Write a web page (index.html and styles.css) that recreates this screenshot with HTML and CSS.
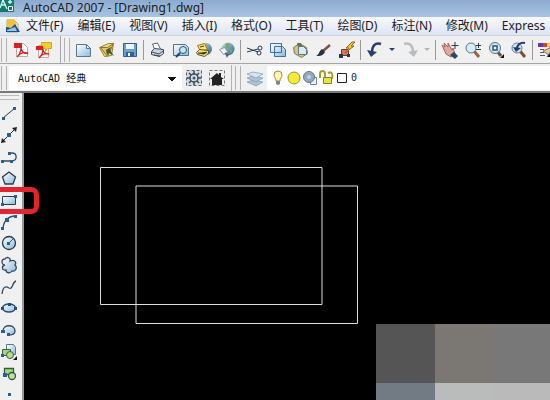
FILE: index.html
```html
<!DOCTYPE html>
<html lang="zh-CN">
<head>
<meta charset="utf-8">
<title>AutoCAD 2007 - [Drawing1.dwg]</title>
<link rel="stylesheet" href="styles.css">
</head>
<body>
<svg class="defs" aria-hidden="true">
  <defs>
    <linearGradient id="blue" x1="0" y1="0" x2="1" y2="1"><stop offset="0" stop-color="#fff"/><stop offset="1" stop-color="#8dbbdc"/></linearGradient>
    <linearGradient id="globe" x1="0" y1="0" x2="1" y2="1"><stop offset="0" stop-color="#b8e0f0"/><stop offset="1" stop-color="#285f92"/></linearGradient>
  </defs>
</svg>
<header class="titlebar">
  <svg class="logo" viewBox="0 0 15 14"><path fill="#137a6c" d="M0 0h14v12H0z"/><path fill="none" stroke="#d9fff4" stroke-width="1.300" d="M0 8 3 0l4 9M1 5h5M10 0v4M8 2h4"/><path fill="#137a6c" stroke="#fff" d="M8.500 6.500h4v4h-4z"/></svg>
  <h1>AutoCAD 2007 - [Drawing1.dwg]</h1>
</header>
<nav class="menubar">
  <svg class="docicon" viewBox="0 0 16 16"><path fill="#fff" stroke="#b5a36a" d="M2 2h7l4 4v8H2z"/><path fill="#edc43b" d="M2 1h7l3 6-3 3-7 1z"/><path fill="#1d4f91" d="m1 9 5 1 4-4 5 8H1z"/><path fill="#9bc4e5" d="m2 12 8-3 2 4H2z"/></svg>
  <button>文件(F)</button><button>编辑(E)</button><button>视图(V)</button><button>插入(I)</button><button>格式(O)</button><button>工具(T)</button><button>绘图(D)</button><button>标注(N)</button><button>修改(M)</button><button>Express</button>
</nav>
<div class="toolbar standard">
  <div class="group pdf">
    <i class="grip"></i>
    <button class="tool" aria-label="PDF"><svg viewBox="0 0 18 18"><path fill="#fff" stroke="#c9a5a5" d="M4.500 2.500h7l4 4v9h-11z"/><path fill="#d81f22" d="M2 2h8v5H2z"/><path fill="none" stroke="#d81f22" stroke-width="1.300" d="M9 7c1 4 3 6 7 5-4-1-8 0-11 4M9 7c0 3-1 6-4 9"/></svg></button>
    <button class="tool" aria-label="PDF 注释"><svg viewBox="0 0 18 18"><path fill="#fff" stroke="#c9a5a5" d="M3.500 4.500h10v12h-10z"/><path fill="#f6cf2c" stroke="#d9a514" d="M6.500 1.500h10v6h-4l-2 3V7.500h-4z"/><path fill="#d81f22" d="M1 5h7v4H1z"/><path fill="none" stroke="#d81f22" stroke-width="1.300" d="M8 8c0 4 2 5 6 5-4-1-7 0-10 4M8 8c0 4-1 6-4 9"/></svg></button>
  </div>
  <div class="group main">
    <i class="grip"></i>
    <button class="tool" aria-label="新建"><svg viewBox="0 0 18 18"><path fill="url(#blue)" stroke="#58778c" d="M1.500 3.500h10l4 4v8h-14zM11.500 3.500v4h4"/></svg></button>
    <button class="tool" aria-label="打开"><svg viewBox="0 0 18 18"><path fill="#f5dc78" stroke="#9b812d" d="m1.500 6.500 9-4 5 0-2 12-7 1z"/><path fill="#e0c561" stroke="#8a742c" d="m2.500 6.500 7 0 6-4-6 13z"/><path fill="#405b35" d="m8 9 5-3-1 3 4 6-5-3-2 2z"/></svg></button>
    <button class="tool" aria-label="保存"><svg viewBox="0 0 18 18"><path fill="#6e9fd0" stroke="#2f5e98" d="M2.500 2.500h13v13h-13z"/><path fill="#eef5fb" d="M5 3h8v5H5z"/><path fill="#315f97" d="M5 11h8v4H5z"/><path fill="#fff" d="M7 12h2v3H7z"/></svg></button>
    <i class="sep"></i>
    <button class="tool" aria-label="打印"><svg viewBox="0 0 18 18"><path fill="#fff" stroke="#596574" d="m5.500 8-2-5 5-1 3 6"/><path fill="#ced6e0" stroke="#384a62" d="m2.500 10.500 3-3 9 1v4l-4 3-8-2z"/><path fill="none" stroke="#384a62" d="m3 11 7 2 4-3M5 14l6 1"/></svg></button>
    <button class="tool" aria-label="打印预览"><svg viewBox="0 0 18 18"><path fill="url(#blue)" stroke="#4e7391" d="M1.500 3.500h12l3 3v8h-15z"/><circle cx="11" cy="9" r="3.500" fill="#c5e8f6" stroke="#31546f"/><path stroke="#24405d" stroke-width="2" d="m8 12-4 4"/></svg></button>
    <button class="tool" aria-label="发布"><svg viewBox="0 0 18 18"><circle cx="11" cy="8" r="6" fill="url(#globe)"/><path fill="#ffe561" stroke="#9c7a1e" d="m2.500 4.500 7-2 3 6-7 2z"/><path fill="#f1dc79" stroke="#665423" d="m1.500 11.500 3-3 9 1v3l-4 3-7-2z"/><path stroke="#403d32" d="m3 12 6 1 3-2M5 6l4-1"/></svg></button>
    <button class="tool" aria-label="三维 DWF"><svg viewBox="0 0 18 18"><circle cx="10" cy="8" r="6.500" fill="url(#globe)"/><path fill="#78a76b" d="m8 2 4 1-1 4-4 1zM12 8l3 1-3 4z"/><path fill="#edf2f5" stroke="#8c9aa4" d="m1.500 8.500 5-2 3 4-4 3z"/><path fill="#3c6285" d="m7 12 4 1-2 4z"/></svg></button>
    <i class="sep"></i>
    <button class="tool" aria-label="剪切"><svg viewBox="0 0 18 18"><g fill="none" stroke="#26384d"><path d="m1 7 11 4M1 11l11-3"/><circle cx="14" cy="7" r="2"/><circle cx="13" cy="12" r="2"/></g></svg></button>
    <button class="tool" aria-label="复制"><svg viewBox="0 0 18 18"><path fill="url(#blue)" stroke="#3b719d" d="M1.500 2.500h11v9h-11zM5.500 5.500h8l3 3v7h-11z"/></svg></button>
    <button class="tool" aria-label="粘贴"><svg viewBox="0 0 18 18"><path fill="#d4c57e" stroke="#81794a" d="m1.500 6.500 6-4 7 4 1 6-6 4-7-4z"/><path fill="#dcebf2" stroke="#59788a" d="M6.500 5.500h5l3 3v5h-8z"/><path fill="#68764f" d="m5 2 4 0 1 3-4 1z"/></svg></button>
    <button class="tool" aria-label="特性匹配"><svg viewBox="0 0 18 18"><path stroke="#7b5144" stroke-width="2.500" d="m8 10 7-6"/><path fill="#253340" d="m7 8 3 3c-2 4-5 4-9 4 3-1 3-5 6-7z"/></svg></button>
    <button class="tool" aria-label="块编辑器"><svg viewBox="0 0 18 18"><path fill="#d9785e" stroke="#7c352a" d="M3.500 8.500h7v6h-7z"/><path fill="#f7cb2f" stroke="#88651c" d="m14 1-6 6h3l-4 5 9-7h-3l4-4z"/><path fill="#27374e" d="M1 13h4v4H1zM9 13h3v3H9z"/></svg></button>
    <i class="sep"></i>
    <button class="tool" aria-label="放弃"><svg viewBox="0 0 18 18"><path fill="none" stroke="#263f70" stroke-width="2.500" d="M15 3C9 1 6 5 6 12"/><path fill="#263f70" d="m1 9 10 2-6 5z"/></svg></button>
    <button class="caret" aria-label="放弃列表"></button>
    <button class="tool" aria-label="重做"><svg viewBox="0 0 18 18"><path fill="none" stroke="#b9bdc0" stroke-width="2.500" d="M3 3c6-2 9 2 9 9"/><path fill="#b9bdc0" d="M17 9 7 11l6 5z"/></svg></button>
    <button class="caret off" aria-label="重做列表"></button>
    <i class="sep"></i>
    <button class="tool" aria-label="平移"><svg viewBox="0 0 18 18"><path fill="#e2a99b" stroke="#9b685f" d="m1 4 3 2-1-4 4 4 0-4 4 7 1-2 2 6-4 3-5-3z"/><path fill="#25466d" d="m9 14 4-3 4 4-3 3z"/><path stroke="#2c3747" d="M14 1v7M10.500 4.500h7"/></svg></button>
    <button class="tool" aria-label="实时缩放"><svg viewBox="0 0 18 18"><path stroke="#9c633d" stroke-width="3" d="m10 10 5 6"/><circle cx="7" cy="7" r="5" fill="#d6edf5" stroke="#597788"/><path stroke="#25364a" d="M12 4.500h5M14.500 2v5M12 8.500h5"/></svg></button>
    <button class="tool" aria-label="窗口缩放"><svg viewBox="0 0 18 18"><path stroke="#6a4e3e" stroke-width="3" d="m10 10 4 5"/><circle cx="8" cy="7" r="5.500" fill="#cde5ef" stroke="#58758a"/><path fill="#fff" stroke="#2d587e" stroke-width="1.500" d="M6 5h4v4H6z"/><path fill="#111" d="M17 13v4h-4z"/></svg></button>
    <button class="tool" aria-label="缩放上一个"><svg viewBox="0 0 18 18"><path stroke="#7b503b" stroke-width="3" d="m10 10 5 6"/><circle cx="7" cy="7" r="5" fill="#d3e7ef" stroke="#668294"/><path fill="none" stroke="#233d6c" stroke-width="2" d="M15 2c-5-1-8 2-8 6"/><path fill="#233d6c" d="m3 6 8 1-5 4z"/></svg></button>
    <i class="sep"></i>
    <button class="tool" aria-label="特性"><svg viewBox="0 0 18 18"><path fill="#6a36ad" d="M0 2h5v4H0z"/><path fill="#db3b38" d="M5 2h4v4H5z"/><path fill="#efcf31" d="M9 2h4v4H9z"/><path fill="#3da34a" d="M13 2h4v4h-4z"/><path fill="#ecc99a" stroke="#8c6959" d="m5 10 9-4 3 4-6 4z"/><path stroke="#535e66" d="M2 8.500h4M2 11.500h4M2 14.500h5M9 16l4-6 3 6"/></svg></button>
  </div>
</div>
<div class="toolbar layers">
  <div class="group workspace">
    <i class="grip"></i>
    <select aria-label="工作空间"><option>AutoCAD 经典</option></select>
    <button class="tool" aria-label="工作空间设置"><svg viewBox="0 0 18 18"><path fill="#d3dce1" stroke="#54616c" stroke-dasharray="3 2" d="M1.500 1.500h15v15h-15z"/><circle cx="9" cy="9" r="4" fill="#cfe0ea" stroke="#394955" stroke-width="1.500"/><path stroke="#394955" stroke-width="1.500" d="M9 2v3M9 13v3M2 9h3M13 9h3M4 4l2 2M12 12l2 2M4 14l2-2M12 6l2-2"/><circle cx="9" cy="9" r="1.500" fill="#425b6c"/></svg></button>
    <button class="tool" aria-label="我的工作空间"><svg viewBox="0 0 18 18"><path fill="none" stroke="#777" stroke-dasharray="3 2" d="M1.500 1.500h15v15h-15z"/><path fill="#222" d="m2 10 7-6 2 2V4h2v4l3 2h-2v6H4v-6z"/></svg></button>
  </div>
  <div class="group layer">
    <i class="grip"></i>
    <button class="tool" aria-label="图层特性管理器"><svg viewBox="0 0 18 18"><g fill="#a9c5d7" stroke="#7d9bb2" stroke-width=".7"><path d="m1 13 6-2 10 2-7 4z"/><path d="m1 9 6-2 10 2-7 4z"/><path fill="#d7e5ed" d="m1 5 6-2 10 2-7 4z"/></g></svg></button>
    <button class="layerbox" aria-haspopup="listbox">
      <svg viewBox="0 0 16 18"><path fill="#fff6ac" stroke="#958b55" d="M6 12c0-3-2-3-2-6a4 4 0 0 1 8 0c0 3-2 3-2 6z"/><path fill="#71869b" d="M6 12h4v3l-2 1-2-1z"/></svg>
      <svg viewBox="0 0 16 18"><circle cx="8" cy="9" r="6" fill="#f5eb32" stroke="#94902d"/></svg>
      <svg viewBox="0 0 16 18"><path fill="#eef3f6" stroke="#728490" d="M8.500 8.500h6v7h-6z"/><circle cx="7" cy="8" r="5.500" fill="#91aabb" stroke="#617b8c"/><circle cx="7" cy="8" r="2" fill="#c3d2da"/></svg>
      <svg viewBox="0 0 16 18"><path fill="none" stroke="#a3a32c" stroke-width="2" d="M2 9V5c0-4 5-4 5 0v4M10 4c4-2 5 1 4 6"/><path fill="#e9e344" stroke="#85832a" d="M5.500 8.500h8v6h-8z"/></svg>
      <svg viewBox="0 0 16 18"><path fill="#fff" stroke="#222" d="M3.500 4.500h9v9h-9z"/></svg>
      <span>0</span>
    </button>
  </div>
</div>
<main class="workspace-area">
  <aside class="draw" aria-label="绘图">
    <button aria-label="直线"><svg viewBox="0 0 18 18"><path stroke="#273849" d="M3 14 15 4"/><path fill="#275f91" d="M2 13h3v3H2zM13 3h3v3h-3z"/></svg></button>
    <button aria-label="构造线"><svg viewBox="0 0 18 18"><path stroke="#222" d="M3 15 15 3"/><path fill="#222" d="m1 17 1-5 4 4zM17 1l-1 5-4-4z"/><path fill="#275f91" d="M7 7h4v4H7z"/></svg></button>
    <button aria-label="多段线"><svg viewBox="0 0 18 18"><path fill="none" stroke="#334b61" stroke-width="1.300" d="M3 13h9c6-1 5-8 0-8H9"/><path fill="#275f91" d="M1 12h3v3H1zM10 12h3v3h-3zM8 4h3v3H8z"/></svg></button>
    <button aria-label="正多边形"><svg viewBox="0 0 18 18"><path fill="url(#blue)" stroke="#2c3c4b" stroke-width="1.300" d="m9 3 6.500 5-2.500 7H5L2.500 8z"/></svg></button>
    <button class="picked" aria-label="矩形"><svg viewBox="0 0 18 18"><path fill="url(#blue)" stroke="#2c3c4b" d="M2.500 5.500h13v8h-13z"/><path fill="#275f91" d="M1 12h3v3H1zM14 4h3v3h-3z"/></svg></button>
    <button aria-label="圆弧"><svg viewBox="0 0 18 18"><path fill="none" stroke="#334b61" stroke-width="1.300" d="M3 16C3 9 8 3 15 3"/><path fill="#275f91" d="M1 14h3v3H1zM5 5h4v4H5zM14 2h3v3h-3z"/></svg></button>
    <button aria-label="圆"><svg viewBox="0 0 18 18"><circle cx="9" cy="9" r="6.500" fill="url(#blue)" stroke="#273849" stroke-width="1.300"/><path stroke="#275f91" d="m9 9 4-4"/><path fill="#275f91" d="M7 8h3v3H7z"/></svg></button>
    <button aria-label="修订云线"><svg viewBox="0 0 18 18"><path fill="url(#blue)" stroke="#34495b" stroke-width="1.300" d="M5 9C1 9 1 3 5 3c2-3 6-1 5 2 4-2 7 1 5 4 3 3 0 7-3 6-2 3-6 2-6-1-4 1-5-4-1-5z"/></svg></button>
    <button aria-label="样条曲线"><svg viewBox="0 0 18 18"><path fill="none" stroke="#34495b" stroke-width="1.300" d="M2 16c1-8 4-8 7-6 4 2 3-6 7-7"/></svg></button>
    <button aria-label="椭圆"><svg viewBox="0 0 18 18"><ellipse cx="9" cy="9" rx="6.500" ry="4" fill="url(#blue)" stroke="#245071" stroke-width="1.300"/><path fill="#245071" d="M1 8h3v3H1zM14 8h3v3h-3zM8 4h3v3H8z"/></svg></button>
    <button aria-label="椭圆弧"><svg viewBox="0 0 18 18"><path fill="url(#blue)" stroke="#34495b" stroke-width="1.300" d="M3 10c0-7 12-7 12 0 0 3-3 4-6 4"/><path fill="#275f91" d="M1 9h4v3H1zM7 12h3v3H7z"/></svg></button>
    <button aria-label="插入块"><svg viewBox="0 0 18 18"><path fill="url(#blue)" stroke="#547992" d="M6.500 1.500h7l2 3v7h-9z"/><path fill="#a7d77a" stroke="#3a6240" d="M2.500 6.500h8v6h-8z"/><circle cx="10" cy="12" r="3.500" fill="#b8da91" stroke="#3a6240"/><path fill="#275f91" d="M1 11h3v3H1z"/><path fill="#111" d="M17 13v4h-4z"/></svg></button>
    <button aria-label="创建块"><svg viewBox="0 0 18 18"><path fill="#a7d77a" stroke="#2f5c3a" stroke-width="1.300" d="M4.500 4.500h9v6h-9z"/><circle cx="12" cy="12" r="3.500" fill="#c2dfa0" stroke="#2f5c3a" stroke-width="1.300"/><path fill="#275f91" d="M3 9h4v4H3z"/></svg></button>
    <button aria-label="点"><svg viewBox="0 0 18 18"><path fill="#275f91" d="M8 7h3v3H8z"/></svg></button>
  </aside>
  <section class="canvas" aria-label="Drawing1">
    <svg class="drawing" width="340" height="240" viewBox="0 0 340 240"><g fill="none" stroke="#ddd"><path d="M76.500 74.500h221.500v137H76.500z"/><path d="M112 93h221.500v137.500H112z"/></g></svg>
    <div class="tiles"><i></i><i></i><i></i><i></i><i></i><i></i></div>
  </section>
</main>
</body>
</html>
```
FILE: styles.css
```css
*, ::before, ::after { box-sizing: border-box; }
html, body { height: 100%; }
body {
  margin: 0;
  display: flex;
  flex-direction: column;
  overflow: hidden;
  background: #f0f0f0;
  color: #1c1c1c;
  font: 12px/16px "Noto Sans", "Noto Sans CJK SC", sans-serif;
}
button { border: 0; padding: 0; background: none; color: inherit; font: inherit; }
svg { display: block; flex: none; }
.defs { position: absolute; width: 0; height: 0; }

.titlebar {
  display: flex;
  align-items: flex-start;
  gap: 8px;
  height: 17px;
  background: linear-gradient(#8cabcf, #a8c4e2);
}
.logo { width: 15px; height: 14px; }
h1 { margin: 0; font-size: 12px; line-height: 15px; font-weight: 400; }

.menubar {
  display: flex;
  align-items: center;
  gap: 14px;
  height: 19px;
  padding-left: 5px;
  background: linear-gradient(#f7f9fd, #dfe4f3);
  border-bottom: 1px solid #cfd3dc;
  white-space: nowrap;
}
.docicon { width: 16px; height: 16px; margin-right: -9px; }

.toolbar { display: flex; overflow: hidden; }
.standard { height: 28px; border-bottom: 1px solid #a6a6a6; }
.layers { height: 29px; padding-top: 1px; border-bottom: 2px solid #777; }
.group { display: flex; align-items: center; flex: none; }
.pdf { width: 61px; border-right: 1px solid #a6a6a6; }
.main { padding-left: 2px; }
.grip {
  flex: none;
  width: 6px;
  height: 24px;
  margin: 0 2px 0 1px;
  border: solid #b2b2b2;
  border-width: 0 1px;
}
.tool { flex: none; display: grid; place-items: center; width: 23px; height: 24px; }
.tool svg { width: 18px; height: 18px; }
.sep { flex: none; width: 1px; height: 20px; margin: 0 2px; background: #999; }
.caret { flex: none; width: 12px; height: 24px; display: grid; place-items: center; }
.caret::before { content: ""; border: 3px solid transparent; border-top-color: #263f70; border-bottom: 0; }
.caret.off::before { border-top-color: #b5b5b5; }

select {
  appearance: none;
  width: 173px;
  height: 24px;
  padding: 1px 8px 0;
  border: 1px solid #fff;
  border-radius: 0;
  background:
    linear-gradient(to bottom left, #111 50%, transparent 51%) 158px 10px / 4px 4px no-repeat,
    linear-gradient(to bottom right, #111 50%, transparent 51%) 162px 10px / 4px 4px no-repeat,
    #fff;
  color: #111;
  font: 10px/20px "DejaVu Sans Mono", "Noto Sans CJK SC", monospace;
}
.workspace { width: 232px; border-right: 1px solid #b2b2b2; }
.layer { flex: 1; padding-left: 2px; }
.layerbox {
  flex: 1;
  display: flex;
  align-items: center;
  height: 24px;
  margin-left: 1px;
  padding-left: 3px;
  background: #fff;
  font: 10px/20px "DejaVu Sans Mono", monospace;
}
.layerbox svg { width: 16px; height: 18px; }
.layerbox span { padding-left: 1px; }

.workspace-area { flex: 1; min-height: 0; display: flex; }
.draw {
  width: 24px;
  flex: none;
  display: flex;
  flex-direction: column;
  border-right: 2px solid #999;
}
.draw::before {
  content: "";
  flex: none;
  height: 5px;
  margin: 2px 3px 2px 0;
  border: solid #bbb;
  border-width: 1px 0;
}
.draw button { flex: none; width: 18px; height: 22px; display: grid; place-items: center; position: relative; }
.draw button:nth-child(3n) { height: 21px; }
.draw svg { width: 18px; height: 18px; }
.picked::after {
  content: "";
  position: absolute;
  z-index: 1;
  top: -2px;
  left: -8px;
  width: 47px;
  height: 27px;
  border: 5px solid #e0252e;
  border-radius: 8px;
}
.canvas { flex: 1; position: relative; overflow: hidden; background: #000; }
.tiles {
  position: absolute;
  right: 0;
  bottom: 0;
  display: grid;
  grid-template: 59px 17px / 59px 59px 56px;
}
.tiles i:nth-child(1) { background: #555; }
.tiles i:nth-child(2) { background: #7b7874; }
.tiles i:nth-child(3) { background: #787878; }
.tiles i:nth-child(4) { background: #727b84; }
.tiles i:nth-child(5) { background: #b9bcba; }
.tiles i:nth-child(6) { background: #bababa; }
```
